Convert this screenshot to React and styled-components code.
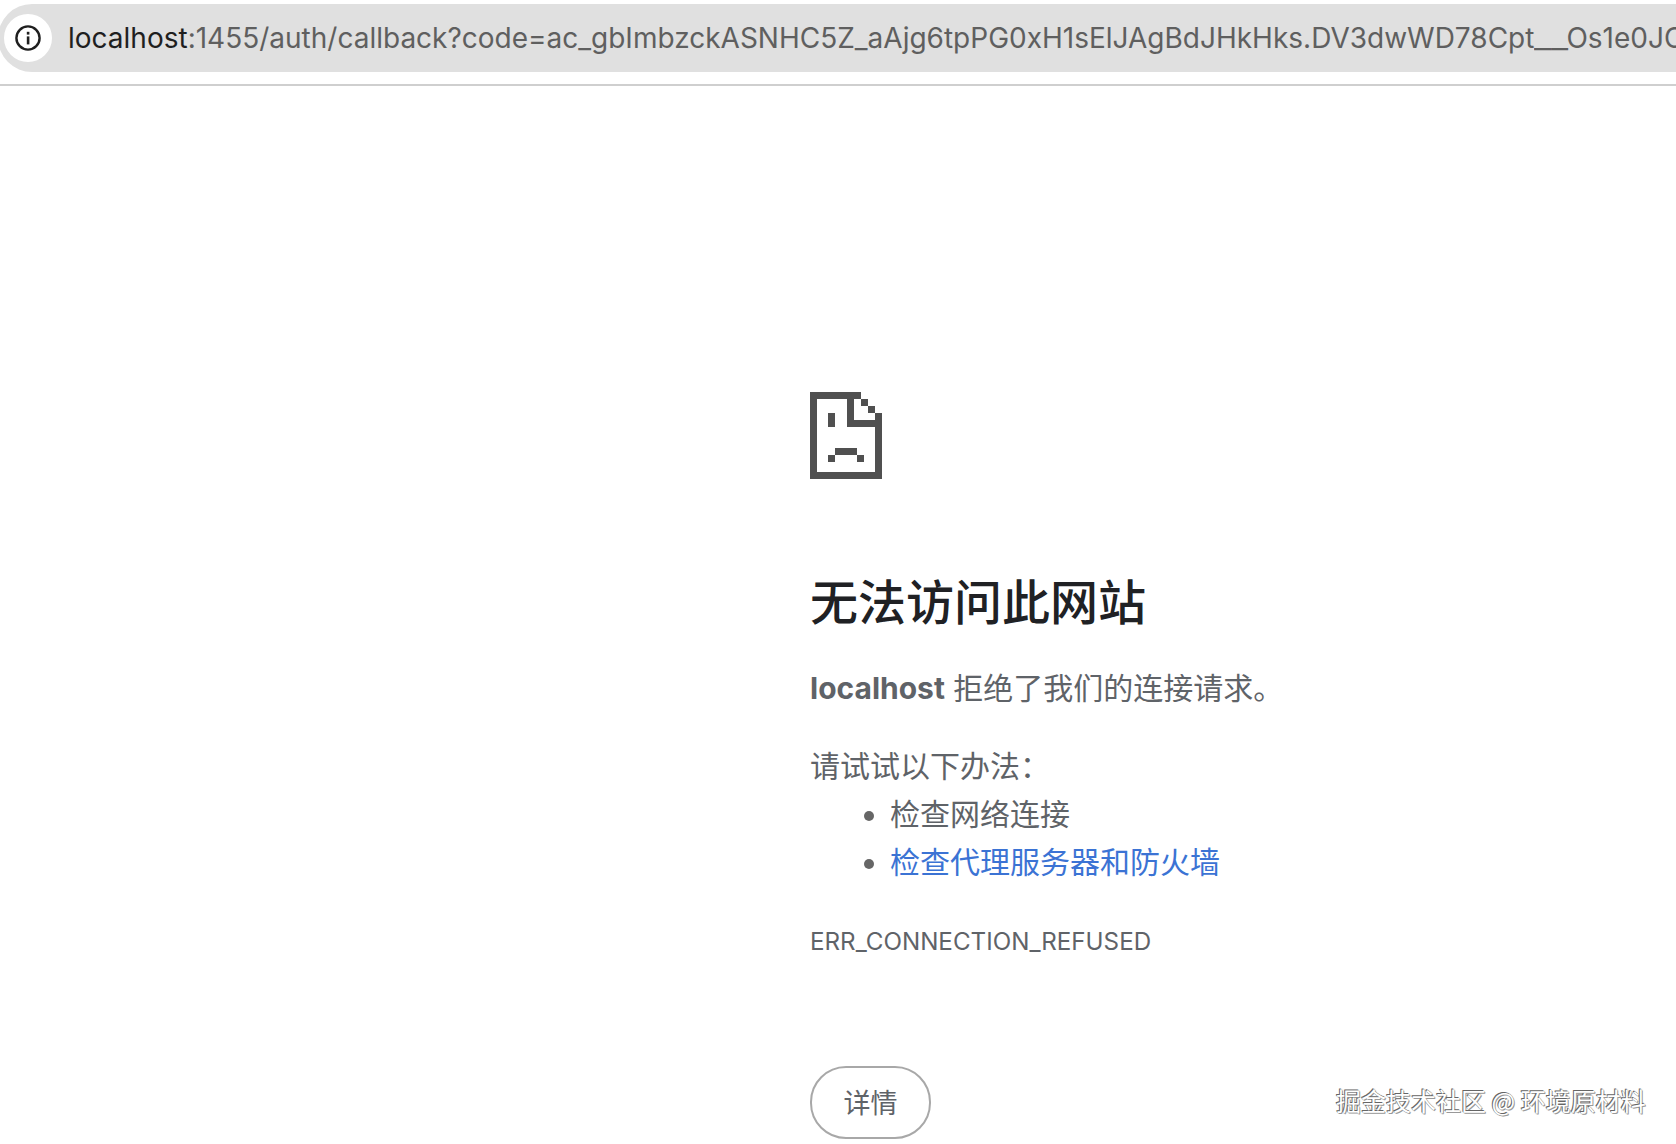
import React from "react";
import styled, { createGlobalStyle } from "styled-components";

const Global = createGlobalStyle`
  html, body { margin: 0; padding: 0; background: #fff; height: 100%; overflow: hidden; }
  body { font-family: Inter, "Noto Sans CJK SC", sans-serif; }
`;
const Page = styled.div`
  position: relative;
  width: 1676px;
  height: 1144px;
  overflow: hidden;
  background: #fff;
`;
const Toolbar = styled.header`
  height: 86px;
  padding-top: 4px;
  box-sizing: border-box;
  border-bottom: 2px solid #cfcfcf;
`;
const UrlBar = styled.div`
  display: flex;
  align-items: center;
  height: 68px;
  margin-left: -2px;
  padding-left: 6px;
  background: #e0e0e0;
  border-radius: 34px 0 0 34px;
  overflow: hidden;
  white-space: nowrap;
`;
const InfoChip = styled.div`
  flex: none;
  display: flex;
  align-items: center;
  justify-content: center;
  width: 48px;
  height: 48px;
  margin-right: 16px;
  border-radius: 50%;
  background: #fff;
`;
const Url = styled.div`
  font-size: 28px;
  color: #5f5f5f;
`;
const Host = styled.span`
  color: #1f1f1f;
`;
const WideUnderscores = styled.span`
  display: inline-block;
  width: 32px;
  transform: scaleX(1.34);
  transform-origin: left center;
`;
const Main = styled.main`
  padding: 306px 0 0 810px;
`;
const SadIcon = styled.svg`
  display: block;
  width: 72px;
  height: 87px;
`;
const Heading = styled.h1`
  margin: 91px 0 0;
  font-size: 48px;
  line-height: 66px;
  font-weight: 500;
  color: #202124;
`;
const Summary = styled.p`
  margin: 30px 0 0;
  font-size: 30px;
  line-height: 44px;
  color: #5f6368;
`;
const Strong = styled.b`
  font-weight: 700;
`;
const Advice = styled.p`
  margin: 34px 0 0;
  font-size: 30px;
  line-height: 44px;
  color: #5f6368;
`;
const Tips = styled.ul`
  margin: 2px 0 0;
  padding: 0 0 0 80px;
  font-size: 30px;
  line-height: 48px;
  color: #5f6368;
`;
const Tip = styled.li`
  &::marker { color: #666; }
`;
const TipLink = styled.a`
  color: #3b73d4;
  text-decoration: none;
`;
const Code = styled.div`
  margin-top: 38px;
  font-size: 24.2px;
  line-height: 36px;
  color: #5f6368;
`;
const DetailsButton = styled.button`
  display: block;
  margin-top: 106px;
  width: 121px;
  height: 73px;
  padding: 0 0 2px;
  box-sizing: border-box;
  border: 2px solid #a8a8a8;
  border-radius: 36px;
  background: #fff;
  color: #5f6368;
  font-family: "Noto Sans CJK SC", sans-serif;
  font-size: 27px;
`;
const Watermark = styled.div`
  position: absolute;
  left: 1336px;
  top: 1082px;
  font-family: "Noto Sans CJK SC", sans-serif;
  font-size: 25px;
  line-height: 36px;
  color: #fff;
  text-shadow: -1px -1px 0 #666, 1px 1px 0 #999, 0 0 1px #555;
  white-space: nowrap;
`;

export default function App() {
  return (
    <Page>
      <Global />
      <Toolbar>
        <UrlBar>
          <InfoChip>
            <svg width="28" height="28" viewBox="0 0 28 28" fill="none">
              <circle cx="14" cy="14" r="11.6" stroke="#1f1f1f" strokeWidth="2.4" />
              <rect x="12.8" y="12.4" width="2.6" height="8" fill="#1f1f1f" />
              <rect x="12.8" y="7.8" width="2.6" height="2.8" fill="#1f1f1f" />
            </svg>
          </InfoChip>
          <Url>
            <Host>localhost</Host>:1455/auth/callback?code=ac_gbImbzckASNHC5Z_aAjg6tpPG0xH1sElJAgBdJHkHks.DV3dwWD78Cpt<WideUnderscores>__</WideUnderscores>Os1e0JC
          </Url>
        </UrlBar>
      </Toolbar>
      <Main>
        <SadIcon viewBox="0 0 72 87" shapeRendering="crispEdges" aria-hidden="true">
          <path
            fill="#505050"
            fillRule="evenodd"
            d="M0 0H51V7H58V14H65V21H72V87H0ZM7 7V80H65V35H37V7ZM44 7V28H65V21H58V14H51V7Z"
          />
          <path fill="#505050" d="M18 21H25V35H18ZM25 56H47V63H25ZM18 63H25V70H18ZM47 63H54V70H47Z" />
        </SadIcon>
        <Heading>无法访问此网站</Heading>
        <Summary>
          <Strong>localhost</Strong> 拒绝了我们的连接请求。
        </Summary>
        <Advice>请试试以下办法：</Advice>
        <Tips>
          <Tip>检查网络连接</Tip>
          <Tip>
            <TipLink href="#">检查代理服务器和防火墙</TipLink>
          </Tip>
        </Tips>
        <Code>ERR_CONNECTION_REFUSED</Code>
        <DetailsButton>详情</DetailsButton>
      </Main>
      <Watermark>掘金技术社区 @ 环境原材料</Watermark>
    </Page>
  );
}
